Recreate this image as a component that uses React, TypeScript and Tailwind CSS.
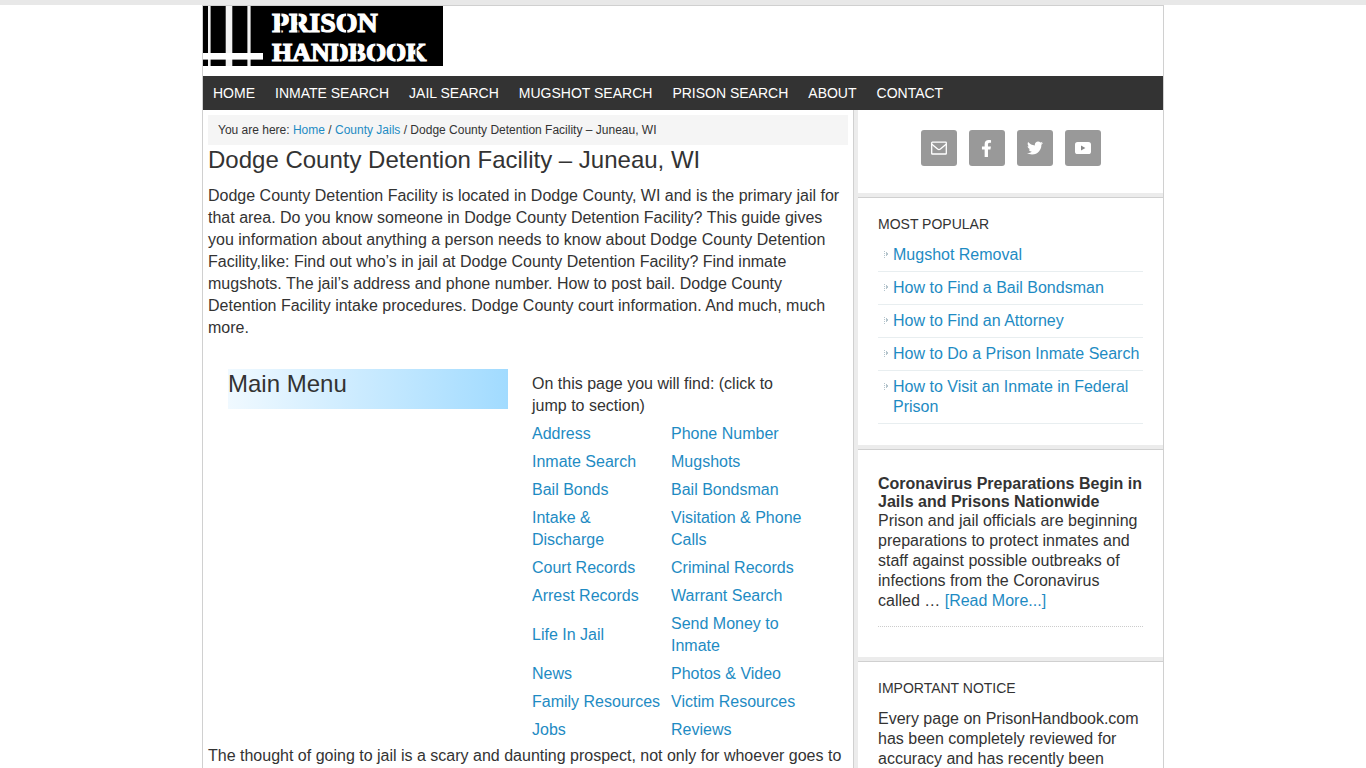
import type { ReactNode } from "react";
import { FaFacebookF, FaTwitter } from "react-icons/fa";

const NAV = [
  "HOME",
  "INMATE SEARCH",
  "JAIL SEARCH",
  "MUGSHOT SEARCH",
  "PRISON SEARCH",
  "ABOUT",
  "CONTACT",
];

const SECTIONS = [
  ["Address", "Phone Number"],
  ["Inmate Search", "Mugshots"],
  ["Bail Bonds", "Bail Bondsman"],
  ["Intake & Discharge", "Visitation & Phone Calls"],
  ["Court Records", "Criminal Records"],
  ["Arrest Records", "Warrant Search"],
  ["Life In Jail", "Send Money to Inmate"],
  ["News", "Photos & Video"],
  ["Family Resources", "Victim Resources"],
  ["Jobs", "Reviews"],
];

const POPULAR = [
  "Mugshot Removal",
  "How to Find a Bail Bondsman",
  "How to Find an Attorney",
  "How to Do a Prison Inmate Search",
  "How to Visit an Inmate in Federal Prison",
];

function Link({ children }: { children: ReactNode }) {
  return (
    <a href="#" className="text-[#1e8bc3] hover:underline">
      {children}
    </a>
  );
}

function Logo() {
  return (
    <svg
      width="240"
      height="60"
      viewBox="0 0 240 60"
      role="img"
      aria-label="Prison Handbook"
      className="overflow-visible"
    >
      <rect width="240" height="60" fill="#000" />
      {/* cell bars */}
      <g fill="#f2f2f2">
        <rect x="5" y="0" width="2.6" height="60" />
        <rect x="22.7" y="0" width="6.6" height="60" />
        <rect x="44.4" y="0" width="3.2" height="60" />
        <rect x="0" y="47" width="60" height="6.6" fill="#fff" />
      </g>
      <g
        fill="#fff"
        stroke="#fff"
        strokeWidth="1.2"
        fontFamily="'Liberation Serif', serif"
        fontWeight="700"
      >
        <text x="69" y="25.5" fontSize="28">PRISON</text>
        <text x="69" y="55.2" fontSize="26">HANDBOOK</text>
      </g>
      {/* stencil cuts */}
      <g stroke="#000" strokeWidth="1.1">
        <path d="M77.8 5v22M95 5v22M143.7 5v23" />
        <path d="M136.2 36v22M154 36v22M173 36v22M193.2 36v22M213 36v22" />
      </g>
    </svg>
  );
}

function SocialLink({ label, children }: { label: string; children: ReactNode }) {
  return (
    <a
      href="#"
      aria-label={label}
      className="flex h-9 w-9 items-center justify-center rounded-[3px] bg-[#999] text-white hover:bg-[#666]"
    >
      {children}
    </a>
  );
}

function Widget({ title, children }: { title?: string; children: ReactNode }) {
  return (
    <section className="border-t border-[#d0d0d0] bg-white px-5">
      {title && <h4 className="mt-4 mb-[11px] text-sm leading-5">{title}</h4>}
      {children}
    </section>
  );
}

function Sidebar() {
  return (
    <aside className="flex w-[310px] shrink-0 flex-col gap-1 border-l border-[#d0d0d0] bg-[#ececec] pl-1 leading-5">
      <section className="flex justify-center gap-3 bg-white pt-5 pb-[27px]">
        <SocialLink label="Email">
          <svg width="16" height="14" viewBox="0 0 16 14" fill="none" stroke="currentColor" strokeWidth="1.3">
            <rect x="0.7" y="1.2" width="14.6" height="11.8" rx="0.6" />
            <path d="M0.9 3.2 6.6 8.1Q8 9.2 9.4 8.1L15.1 3.2" />
          </svg>
        </SocialLink>
        <SocialLink label="Facebook">
          <FaFacebookF size={17} />
        </SocialLink>
        <SocialLink label="Twitter">
          <FaTwitter size={16} />
        </SocialLink>
        <SocialLink label="YouTube">
          <svg width="16" height="12" viewBox="0 0 16 12">
            <rect width="16" height="12" rx="2.6" fill="currentColor" />
            <path d="M6 3.6v4.8L10.4 6z" fill="#888" />
          </svg>
        </SocialLink>
      </section>

      <Widget title="MOST POPULAR">
        <ul className="-mt-1.5 pb-[21px]">
          {POPULAR.map((item) => (
            <li key={item} className="flex border-b border-[#e8eef0] py-1.5">
              <svg width="15" height="20" viewBox="0 0 15 20" className="shrink-0" fill="#b4c4cc">
                <path d="M6 6h1v1h-1zM6 8h1v1h-1zM8 7h1v1h-1zM8 8h2v2h-2zM6 10h1v1h-1zM8 10h1v1h-1zM6 12h1v1h-1z" />
              </svg>
              <Link>{item}</Link>
            </li>
          ))}
        </ul>
      </Widget>

      <Widget>
        <article className="mt-[25px] mb-[30px] border-b border-dotted border-[#ccc] pb-[15px]">
          <h2 className="font-bold leading-[18px]">
            Coronavirus Preparations Begin in Jails and Prisons Nationwide
          </h2>
          <p>
            Prison and jail officials are beginning preparations to protect inmates and staff
            against possible outbreaks of infections from the Coronavirus called …{" "}
            <Link>[Read More...]</Link>
          </p>
        </article>
      </Widget>

      <div className="flex grow flex-col bg-white">
        <Widget title="IMPORTANT NOTICE">
          <p>
            Every page on PrisonHandbook.com has been completely reviewed for accuracy and has
            recently been
          </p>
        </Widget>
      </div>
    </aside>
  );
}

function MainMenu() {
  return (
    <div className="mt-[30px] ml-5 flex gap-5">
      <h2 className="h-10 w-[280px] bg-linear-to-r from-[#f0f9ff] via-[#cbebff] via-47% to-[#a1dbff] text-2xl leading-[30px]">
        Main Menu
      </h2>
      <div className="w-[280px] pt-1 pb-px">
        <p className="mb-[3px] px-1">On this page you will find: (click to jump to section)</p>
        <table className="w-full table-fixed border-collapse">
          <colgroup>
            <col className="w-[139px]" />
            <col />
          </colgroup>
          <tbody>
            {SECTIONS.map((row) => (
              <tr key={row[0]}>
                {row.map((cell) => (
                  <td key={cell} className="px-1 py-[3px] align-middle">
                    <Link>{cell}</Link>
                  </td>
                ))}
              </tr>
            ))}
          </tbody>
        </table>
      </div>
    </div>
  );
}

export default function App() {
  return (
    <div className="flex min-h-screen flex-col border-t-[5px] border-[#e8e8e8] bg-white font-['Liberation_Sans',Arial,sans-serif] text-base leading-[22px] text-[#333]">
      <div className="mx-auto flex w-full max-w-[962px] grow flex-col border-x border-t border-[#d0d0d0]">
        <header className="pb-2.5">
          <a href="#" className="block w-60">
            <Logo />
          </a>
        </header>

        <nav className="flex bg-[#333] text-sm leading-[22px] text-white">
          {NAV.map((item) => (
            <a key={item} href="#" className="px-2.5 py-1.5 hover:bg-[#555]">
              {item}
            </a>
          ))}
        </nav>

        <div className="flex grow">
          <main className="min-w-0 flex-1 px-[5px] pt-[5px]">
            <div className="bg-[#f5f5f5] px-2.5 text-xs leading-[30px]">
              You are here: <Link>Home</Link> / <Link>County Jails</Link> / Dodge County Detention
              Facility – Juneau, WI
            </div>
            <h1 className="mb-2.5 text-2xl leading-[30px]">
              Dodge County Detention Facility – Juneau, WI
            </h1>
            <p>
              Dodge County Detention Facility is located in Dodge County, WI and is the primary jail
              for that area. Do you know someone in Dodge County Detention Facility? This guide
              gives you information about anything a person needs to know about Dodge County
              Detention Facility,like: Find out who’s in jail at Dodge County Detention Facility?
              Find inmate mugshots. The jail’s address and phone number. How to post bail. Dodge
              County Detention Facility intake procedures. Dodge County court information. And much,
              much more.
            </p>
            <MainMenu />
            <p>
              The thought of going to jail is a scary and daunting prospect, not only for whoever
              goes to
            </p>
          </main>
          <Sidebar />
        </div>
      </div>
    </div>
  );
}
